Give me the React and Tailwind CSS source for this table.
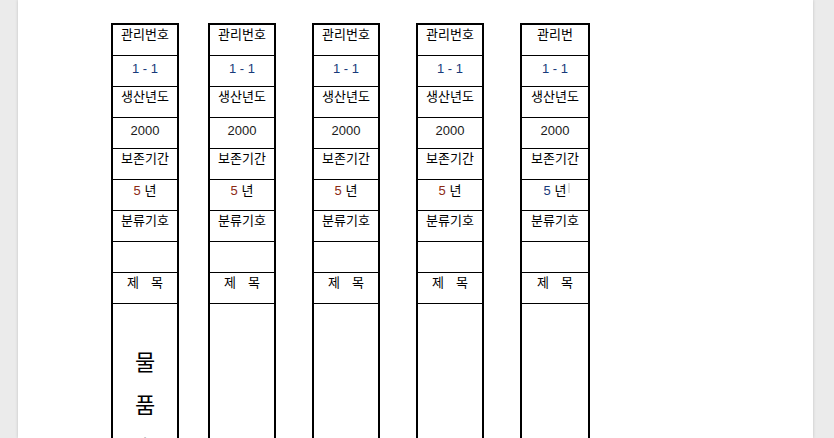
import React from "react";

const font = { fontFamily: '"Liberation Sans", "Noto Sans CJK KR", sans-serif' };

function Row({ children, className = "" }) {
  return (
    <div className={`h-[31px] border-b border-black flex justify-center text-[13px] leading-[20px] ${className}`}>
      {children}
    </div>
  );
}

function Column({ header, fiveColor, width, extra }) {
  return (
    <div className={`${width} border-2 border-black flex flex-col shrink-0`}>
      <Row>{header}</Row>
      <Row><span className="pt-[3px] text-[#173a7a]">1 - 1</span></Row>
      <Row>생산년도</Row>
      <Row><span className="pt-[3px] text-[#1a1a1a]">2000</span></Row>
      <Row>보존기간</Row>
      <Row>
        <span className="relative pt-[1px]">
          <span className={fiveColor}>5</span> 년
          {extra && <span className="absolute -right-[4px] top-[3px] w-[2px] h-[10px] bg-[#dcdcdc]" />}
        </span>
      </Row>
      <Row>분류기호</Row>
      <Row />
      <Row>
        <span className="flex gap-[12px]"><span>제</span><span>목</span></span>
      </Row>
      <div className="h-[300px]" />
    </div>
  );
}

export default function App() {
  return (
    <div className="w-[834px] h-[438px] overflow-hidden bg-[#ebebeb]" style={font}>
      <div className="ml-[18px] w-[795px] h-[438px] bg-white shadow-[0_0_3px_rgba(0,0,0,0.18)] text-black">
        <div className="flex pl-[93px] pt-[23px]">
          <div className="w-[68px] border-2 border-black flex flex-col shrink-0">
            <Row>관리번호</Row>
            <Row><span className="pt-[3px] text-[#173a7a]">1 - 1</span></Row>
            <Row>생산년도</Row>
            <Row><span className="pt-[3px] text-[#1a1a1a]">2000</span></Row>
            <Row>보존기간</Row>
            <Row><span className="pt-[1px]"><span className="text-[#8b2a12]">5</span> 년</span></Row>
            <Row>분류기호</Row>
            <Row />
            <Row>
              <span className="flex gap-[12px]"><span>제</span><span>목</span></span>
            </Row>
            <div className="h-[300px] flex flex-col items-center pt-[37px] text-[22px] leading-[43px]">
              <span>물</span>
              <span>품</span>
              <span>출</span>
              <span>납</span>
            </div>
          </div>
          <div className="ml-[29px]">
            <Column header="관리번호" fiveColor="text-[#8b2a12]" width="w-[68px]" />
          </div>
          <div className="ml-[36px]">
            <Column header="관리번호" fiveColor="text-[#8b2a12]" width="w-[68px]" />
          </div>
          <div className="ml-[36px]">
            <Column header="관리번호" fiveColor="text-[#8b2a12]" width="w-[68px]" />
          </div>
          <div className="ml-[36px]">
            <Column header="관리번" fiveColor="text-[#173a7a]" width="w-[70px]" extra />
          </div>
        </div>
      </div>
    </div>
  );
}
